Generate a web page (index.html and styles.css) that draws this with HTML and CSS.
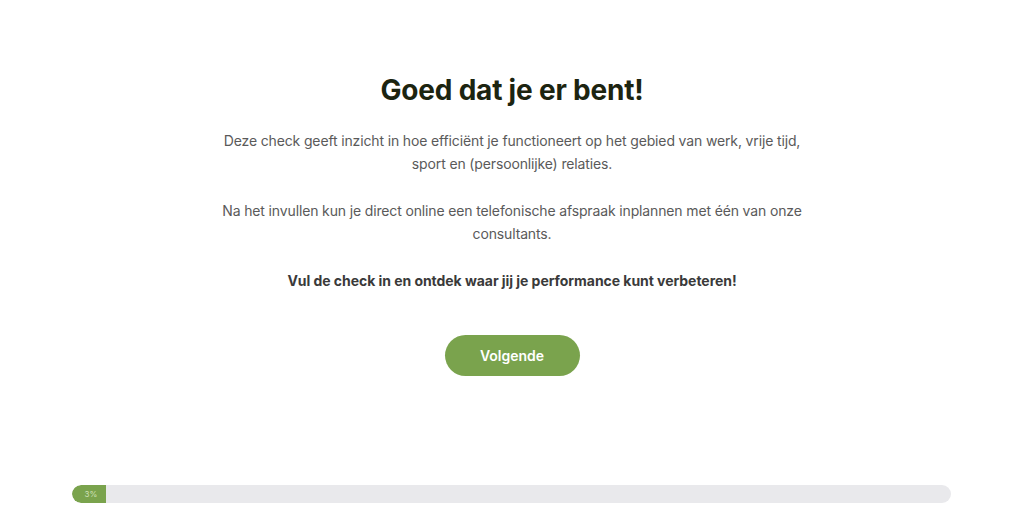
FILE: index.html
```html
<!DOCTYPE html>
<html lang="nl">
<head>
  <meta charset="UTF-8" />
  <meta name="viewport" content="width=device-width, initial-scale=1.0" />
  <title>Performance check</title>
  <link rel="stylesheet" href="styles.css">
</head>
<body>
  <div class="page">
    <main class="intro">
      <h1>Goed dat je er bent!</h1>
      <p>Deze check geeft inzicht in hoe efficiënt je functioneert op het gebied van werk, vrije tijd, sport en (persoonlijke) relaties.</p>
      <p>Na het invullen kun je direct online een telefonische afspraak inplannen met één van onze consultants.</p>
      <p class="lead">Vul de check in en ontdek waar jij je performance kunt verbeteren!</p>
      <button class="btn-next">Volgende</button>
    </main>

    <div class="progress">
      <div class="progress-bar">
        <div class="progress-fill" style="width: 34px;">3%</div>
      </div>
    </div>
  </div>
</body>
</html>
```

FILE: styles.css
```css
body {
  font-family: Inter, "Noto Sans", sans-serif;
  background: #ffffff;
  margin: 0;
  padding: 0;
}
.page {
  display: flex;
  flex-direction: column;
  height: 531px;
}
.intro {
  display: flex;
  flex-direction: column;
  align-items: center;
  width: 600px;
  margin: 0 auto;
  padding-top: 72px;
  text-align: center;
}
h1 {
  margin: 0 0 21px;
  font-size: 28px;
  line-height: 36px;
  font-weight: 700;
  letter-spacing: -0.2px;
  color: #1c2410;
}
.intro p {
  margin: 0 0 24px;
  font-size: 14px;
  line-height: 23px;
  letter-spacing: -0.14px;
  color: #5a5a5a;
}
.intro p.lead {
  font-weight: 700;
  letter-spacing: -0.05px;
  color: #3a3a3a;
}
.btn-next {
  margin-top: 19px;
  width: 135px;
  height: 41px;
  border: none;
  border-radius: 21px;
  background: #7aa34d;
  color: #ffffff;
  font-family: inherit;
  font-size: 14px;
  font-weight: 600;
  cursor: pointer;
}
.progress {
  margin-top: auto;
  padding: 0 73px 28px 72px;
}
.progress-bar {
  height: 18px;
  border-radius: 9px;
  background: #e9e9ec;
  overflow: hidden;
}
.progress-fill {
  height: 100%;
  background: #7aa34d;
  border-radius: 9px 0 0 9px;
  color: #cfe0b8;
  font-size: 8px;
  line-height: 18px;
  text-align: center;
  padding-left: 4px;
  box-sizing: border-box;
}
```
